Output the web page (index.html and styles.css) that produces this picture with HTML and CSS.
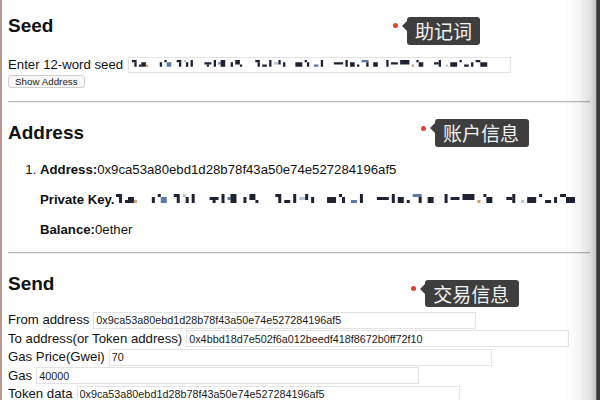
FILE: index.html
```html
<!DOCTYPE html>
<html>
<head>
<meta charset="utf-8">
<link rel="stylesheet" href="styles.css">
</head>
<body>
<svg class="defs" width="0" height="0" aria-hidden="true">
  <symbol id="mosaic" viewBox="0 0 462 12" preserveAspectRatio="none">
    <g fill="#1e2233">
      <rect x="0" y="0" width="6" height="3"/><rect x="3" y="3" width="3" height="6"/><rect x="9" y="6" width="3" height="3"/><rect x="12" y="3" width="6" height="6"/><rect x="18" y="6" width="3" height="3" fill="#c9a46a"/>
      <rect x="36" y="3" width="3" height="6"/><rect x="42" y="0" width="3" height="3"/><rect x="45" y="3" width="6" height="6" fill="#5a7aa8"/>
      <rect x="58" y="0" width="6" height="3"/><rect x="61" y="3" width="3" height="6"/><rect x="67" y="0" width="3" height="3" fill="#b0c4dc"/><rect x="70" y="3" width="3" height="6"/><rect x="76" y="0" width="3" height="9"/>
      <rect x="94" y="3" width="9" height="3"/><rect x="97" y="6" width="3" height="3"/><rect x="106" y="0" width="3" height="9"/><rect x="112" y="3" width="3" height="3" fill="#5a7aa8"/><rect x="115" y="0" width="6" height="9"/>
      <rect x="128" y="3" width="3" height="6"/><rect x="134" y="0" width="6" height="6"/><rect x="140" y="6" width="3" height="3"/>
      <rect x="160" y="0" width="6" height="3"/><rect x="163" y="3" width="3" height="6"/><rect x="169" y="6" width="6" height="3"/><rect x="178" y="0" width="3" height="9"/><rect x="184" y="3" width="6" height="3" fill="#b0c4dc"/><rect x="190" y="0" width="3" height="6"/><rect x="196" y="3" width="3" height="6"/>
      <rect x="212" y="3" width="9" height="6"/><rect x="224" y="0" width="3" height="3"/><rect x="227" y="3" width="3" height="6"/><rect x="236" y="6" width="6" height="3" fill="#5a7aa8"/><rect x="245" y="0" width="3" height="9"/>
      <rect x="262" y="3" width="12" height="3"/><rect x="277" y="0" width="3" height="9"/><rect x="283" y="3" width="6" height="6"/><rect x="292" y="6" width="3" height="3"/><rect x="298" y="0" width="9" height="3" fill="#5a7aa8"/><rect x="304" y="3" width="3" height="6"/><rect x="313" y="3" width="6" height="6"/>
      <rect x="330" y="0" width="3" height="9"/><rect x="336" y="3" width="9" height="3"/><rect x="348" y="0" width="12" height="6"/><rect x="363" y="6" width="3" height="3" fill="#c9a46a"/><rect x="369" y="0" width="3" height="3"/><rect x="372" y="3" width="6" height="6"/>
      <rect x="392" y="3" width="6" height="3"/><rect x="398" y="0" width="3" height="9"/><rect x="407" y="6" width="3" height="3" fill="#b0c4dc"/><rect x="413" y="3" width="9" height="6"/><rect x="425" y="0" width="3" height="3"/><rect x="431" y="6" width="6" height="3"/><rect x="440" y="3" width="3" height="6"/><rect x="446" y="0" width="6" height="3"/><rect x="452" y="3" width="9" height="6"/>
    </g>
  </symbol>
</svg>
<div class="page">
  <h2 class="heading first">Seed</h2>
  <div class="seed-row">
    <span>Enter 12-word seed</span>
    <div class="field seed-field"><svg class="mosaic-seed" width="356" height="9"><use href="#mosaic"/></svg></div>
  </div>
  <button class="btn">Show Address</button>
  <hr class="rule">
  <h2 class="heading">Address</h2>
  <ol class="accounts">
    <li>
      <p class="line"><b>Address:</b>0x9ca53a80ebd1d28b78f43a50e74e527284196af5</p>
      <p class="line"><b>Private Key.</b><svg class="mosaic-key" width="460" height="12"><use href="#mosaic"/></svg></p>
      <p class="line"><b>Balance:</b>0ether</p>
    </li>
  </ol>
  <hr class="rule second">
  <h2 class="heading send">Send</h2>
  <div class="form">
    <div class="frow"><span>From address</span><input class="field" value="0x9ca53a80ebd1d28b78f43a50e74e527284196af5"></div>
    <div class="frow"><span>To address(or Token address)</span><input class="field" value="0x4bbd18d7e502f6a012beedf418f8672b0ff72f10"></div>
    <div class="frow"><span>Gas Price(Gwei)</span><input class="field" value="70"></div>
    <div class="frow"><span>Gas</span><input class="field" value="40000"></div>
    <div class="frow"><span>Token data</span><input class="field" value="0x9ca53a80ebd1d28b78f43a50e74e527284196af5"></div>
  </div>

  <div class="tip t1">助记词</div>
  <div class="tip t2">账户信息</div>
  <div class="tip t3">交易信息</div>
</div>
<div class="edge"></div>
</body>
</html>
```
FILE: styles.css
```css
html, body {
  margin: 0;
  padding: 0;
  background: #fff;
  overflow: hidden;
}
body {
  font-family: "Liberation Sans", Arial, sans-serif;
  font-size: 13.2px;
  color: #111;
  width: 600px;
  height: 400px;
}
.defs {
  position: absolute;
  width: 0;
  height: 0;
}
.page {
  position: relative;
  border-left: 2px solid #b7978f;
  padding: 0 10px 0 6px;
  height: 400px;
  box-sizing: border-box;
}
.heading {
  font-size: 19px;
  font-weight: bold;
  line-height: 22px;
  margin: 0;
  color: #111;
}
.page > .heading.first { margin-top: 0; padding-top: 15px; }
.seed-row {
  display: flex;
  align-items: center;
  gap: 5px;
  height: 16px;
  line-height: 16px;
  margin-top: 19.5px;
}
.field {
  box-sizing: border-box;
  width: 383px;
  height: 17px;
  border: 1px solid #e3e3e3;
  background: #fff;
  font-family: "Liberation Sans", Arial, sans-serif;
  font-size: 10.8px;
  color: #1a1a1a;
  padding: 0 2px;
  margin: 0;
  outline: none;
}
.seed-field {
  height: 16px;
  display: flex;
  align-items: center;
  padding-left: 3px;
}
.mosaic-seed { display: block; }
.btn {
  display: block;
  margin-top: 2.5px;
  height: 13px;
  padding: 0 6px;
  font-family: "Liberation Sans", Arial, sans-serif;
  font-size: 9.8px;
  line-height: 11px;
  color: #222;
  background: #f7f7f7;
  border: 1px solid #cfcfcf;
  border-radius: 3px;
}
.rule {
  border: 0;
  border-top: 1px solid #b9b9b9;
  border-bottom: 1px solid #ececec;
  margin: 13px 0 0;
  height: 0;
}
.rule.second { margin-top: 13.5px; }
.rule + .heading { margin-top: 18.7px; }
.rule.second + .heading { margin-top: 19px; }
.accounts {
  margin: 18.8px 0 0;
  padding-left: 32px;
}
.line {
  margin: 0 0 14px;
  line-height: 16px;
  white-space: nowrap;
}
.line:last-child { margin-bottom: 0; }
.mosaic-key {
  vertical-align: -2px;
  margin-left: 1px;
}
.form {
  margin-top: 16.25px;
}
.frow {
  display: flex;
  align-items: center;
  gap: 4px;
  height: 18.5px;
  line-height: 16px;
  white-space: nowrap;
}
.tip {
  position: absolute;
  height: 28px;
  line-height: 28px;
  padding: 0 8px;
  background: #3e3e3e;
  color: #f3f3f3;
  border-radius: 3px;
  font-family: "Noto Sans CJK SC", sans-serif;
  font-size: 19px;
}
.tip::before {
  content: "";
  position: absolute;
  left: -5px;
  top: 4px;
  border-top: 5px solid transparent;
  border-bottom: 5px solid transparent;
  border-right: 5px solid #3e3e3e;
}
.tip::after {
  content: "";
  position: absolute;
  left: -14.5px;
  top: 6.3px;
  width: 5px;
  height: 5px;
  border-radius: 50%;
  background: #e2412e;
}
.t1 { left: 405px; top: 17px; }
.t2 { left: 433px; top: 119.3px; height: 27.4px; line-height: 27.4px; width: 77.7px; }
.t3 { left: 423.3px; top: 280px; height: 27.3px; line-height: 27.3px; width: 78px; }
.edge {
  position: fixed;
  top: 0;
  right: 0;
  width: 35px;
  height: 400px;
  background: linear-gradient(to right,
    rgba(0,0,0,0) 0px,
    rgba(0,0,0,0.04) 14px,
    rgba(0,0,0,0.12) 25px,
    rgba(0,0,0,0.24) 31px,
    #3a3a3a 31.7px,
    #3a3a3a 35px);
}
```
